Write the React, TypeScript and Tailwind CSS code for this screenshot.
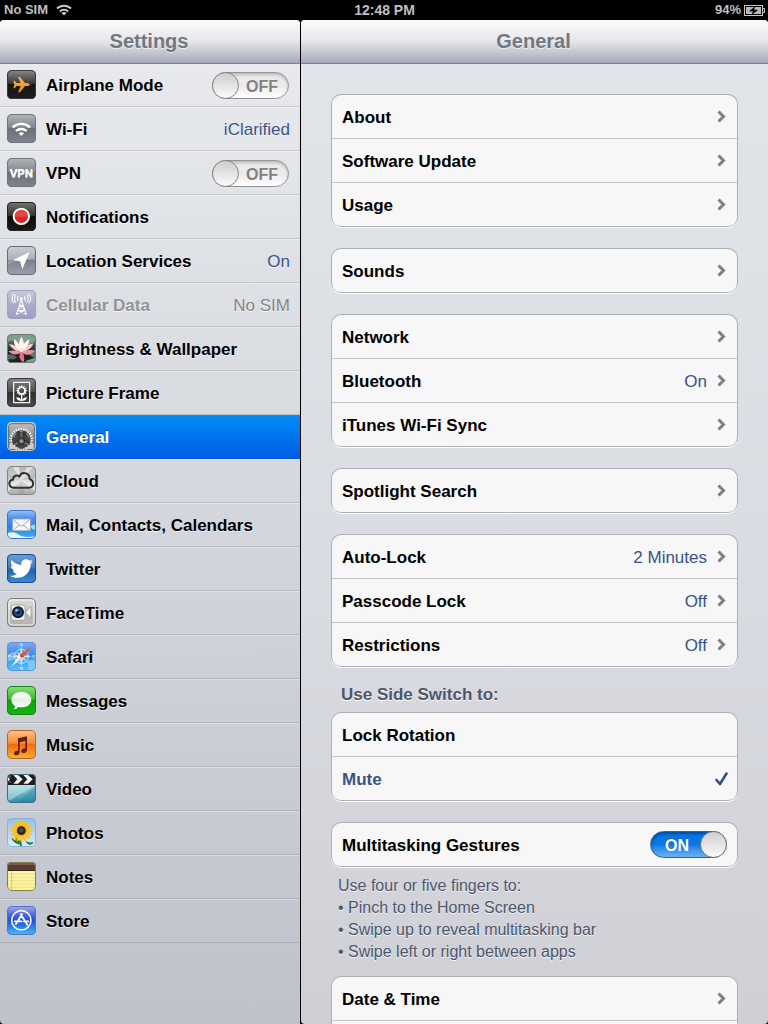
import { useState, type ReactNode } from 'react';
import { FaTwitter } from 'react-icons/fa';

type Stop = [string, string];

function Tile({ id, stops, edge, children }: { id: string; stops: Stop[]; edge: string; children?: ReactNode }) {
  return (
    <svg viewBox="0 0 87 87" className="size-[29px] shrink-0" aria-hidden="true">
      <defs>
        <linearGradient id={`${id}-fill`} x1="0" y1="0" x2="0" y2="1">
          {stops.map(([offset, color]) => (
            <stop key={offset} offset={offset} stopColor={color} />
          ))}
        </linearGradient>
        <clipPath id={`${id}-clip`}>
          <rect width="87" height="87" rx="14" />
        </clipPath>
      </defs>
      <g clipPath={`url(#${id}-clip)`}>
        <rect width="87" height="87" fill={`url(#${id}-fill)`} />
        {children}
      </g>
      <rect x="1.5" y="1.5" width="84" height="84" rx="13" fill="none" stroke={edge} strokeWidth="3" />
    </svg>
  );
}

const black: Stop[] = [['0', '#8a8a8a'], ['0.45', '#3c3c3c'], ['0.5', '#161616'], ['1', '#1c1c1c']];
const gray: Stop[] = [['0', '#b4b6ba'], ['0.48', '#81858c'], ['0.5', '#6a6f78'], ['1', '#7f848f']];

const angles = (n: number) => Array.from({ length: n }, (_, i) => (i * 360) / n);

const AirplaneIcon = () => (
  <Tile id="plane" stops={black} edge="#3a3a3a">
    <defs>
      <linearGradient id="plane-body" x1="0" y1="0" x2="0" y2="1">
        <stop offset="0" stopColor="#ffb84a" />
        <stop offset="1" stopColor="#f08412" />
      </linearGradient>
    </defs>
    <path
      d="M69 44c-2-4-8-5-15-5L39 21h-6l8 18H29l-6-7h-4l3 12-3 11h4l6-7h12l-8 19h6l15-19c7 0 13 0 15-4z"
      fill="url(#plane-body)"
    />
  </Tile>
);

const WifiIcon = () => (
  <Tile id="wifi" stops={gray} edge="#6f737b">
    <g fill="none" stroke="#fff" strokeWidth="7">
      <path d="M17 40a38 38 0 0 1 52 0" />
      <path d="M27 51a24 24 0 0 1 32 0" />
    </g>
    <path d="M43 66l-8-8q8-6 16 0z" fill="#fff" />
  </Tile>
);

const VpnIcon = () => (
  <Tile id="vpn" stops={gray} edge="#6f737b">
    <text x="43" y="57" textAnchor="middle" fontSize="35" fontWeight="700" fontFamily="Roboto, sans-serif" fill="#fff">
      VPN
    </text>
  </Tile>
);

const NotificationsIcon = () => (
  <Tile id="notif" stops={[['0', '#77756f'], ['0.47', '#34332f'], ['0.5', '#0c0c0a'], ['1', '#1a1a18']]} edge="#22221f">
    <circle cx="43" cy="43" r="23" fill="#d92626" stroke="#fff" strokeWidth="6" />
    <path d="M23 43a20 20 0 0 1 40 0q-20 5-40 0z" fill="#ff8d86" opacity=".3" />
  </Tile>
);

const LocationIcon = () => (
  <Tile id="loc" stops={[['0', '#c3c5cc'], ['0.46', '#9b9ea9'], ['0.5', '#7d818f'], ['1', '#9da1ae']]} edge="#676b7a">
    <path d="M0 0h87v36Q43 40 0 56z" fill="#fff" opacity=".18" />
    <path d="M68 18L18 42l21 4 7 23z" fill="#fff" />
  </Tile>
);

const CellularIcon = () => (
  <Tile id="cell" stops={[['0', '#c9cbdd'], ['0.5', '#a9acca'], ['1', '#9c9fc3']]} edge="#9fa2bd">
    <g fill="none" stroke="#f6f6fc" strokeWidth="3.5">
      <path d="M43 29L28 74M43 29l15 45M37 46l18 15M49 46L31 61M38 46h11M32 62h22M29 73l25-12M57 73L32 61" />
      <path d="M34 19q-5 7 0 14M52 19q5 7 0 14M27 14q-9 12 0 24M59 14q9 12 0 24M21 12q-12 14 0 28M65 12q12 14 0 28" />
    </g>
    <circle cx="43" cy="26" r="4.5" fill="#fff" />
  </Tile>
);

const LotusIcon = () => (
  <Tile id="lotus" stops={[['0', '#93a596'], ['0.3', '#4b6456'], ['0.6', '#1b2421'], ['1', '#1a231f']]} edge="#6e7a72">
    <path d="M0 24q22-12 36 4T87 20V10Q50 0 0 8z" fill="#7fa08c" />
    <path d="M60 52q16-8 27-4v22q-14 4-27-18z" fill="#5d7a68" />
    <path d="M0 62q18-4 30 8l-8 6H0z" fill="#4f6a62" />
    <path d="M58 80l29-10v17H54z" fill="#8a9c88" />
    <g fill="#f08da2">
      <path d="M43 56Q20 68 4 52q20-6 39 4z" />
      <path d="M43 56q24 14 40-5-21-8-40 5z" />
      <path d="M43 52Q27 72 50 86q6-20-7-34z" fill="#ea6c86" />
      <path d="M43 54Q18 52 6 30q26 2 37 24z" fill="#fac8cf" />
      <path d="M43 54q27-2 37-26-26 4-37 26z" fill="#fac8cf" />
    </g>
    <g fill="#fff3ee">
      <path d="M43 54Q18 38 21 15q20 12 22 39z" />
      <path d="M43 54q24-14 24-38-22 10-24 38z" />
      <path d="M43 54Q28 30 43 8q16 22 0 46z" />
    </g>
    <path d="M35 46q8-5 16 0l-4 9h-8z" fill="#f8dfae" />
  </Tile>
);

const PictureFrameIcon = () => (
  <Tile id="frame" stops={[['0', '#868686'], ['0.48', '#4b4b4b'], ['0.5', '#2e2e2e'], ['1', '#4a4a4a']]} edge="#3b3b3b">
    <rect x="20" y="13" width="48" height="61" fill="none" stroke="#fff" strokeWidth="3.5" />
    <g fill="#fff">
      {angles(12).map((a) => (
        <path key={a} d="M44 20l4 10h-8z" transform={`rotate(${a} 44 38)`} />
      ))}
      <path d="M42 48h4v22h-4zM43 68q-13 2-15-10 12 0 15 10zM45 68q13 2 15-10-12 0-15 10z" />
    </g>
    <circle cx="44" cy="38" r="10" fill="none" stroke="#fff" strokeWidth="5" />
    <circle cx="44" cy="38" r="7" fill="#555" />
  </Tile>
);

const GeneralIcon = () => (
  <Tile id="general" stops={[['0', '#c4c4c4'], ['0.5', '#8d8d8d'], ['1', '#5f5f5f']]} edge="#c9c9c9">
    <rect x="5" y="5" width="77" height="77" rx="9" fill="none" stroke="#6b6b6b" strokeWidth="3" />
    <path d="M7 54a37 37 0 0 1 73 0v14H7z" fill="#6f6f6f" />
    <g fill="#f0f0f0">
      {angles(26).map((a) => (
        <path key={a} d="M41 17h4l1 12h-6z" transform={`rotate(${a} 43 53)`} />
      ))}
    </g>
    <circle cx="43" cy="53" r="28" fill="#454545" />
    <path d="M20 46a24 24 0 0 1 46 0" fill="none" stroke="#8c8c8c" strokeWidth="4" />
    <path d="M36 52L27 30l10-4 6 16 6-16 10 4-9 22 20 9-3 9H19l-3-9z" fill="#383838" />
    <path d="M43 57V34M43 57L22 68M43 57l21 11" stroke="#787878" strokeWidth="5" />
    <circle cx="43" cy="57" r="10" fill="#5b5b5b" stroke="#262626" strokeWidth="3" />
    <circle cx="43" cy="58" r="4" fill="#a8a8a8" />
    <path d="M7 64l7-2 3 7 7-1 2 7 8 1v5H7zM80 64l-7-2-3 7-7-1-2 7-8 1v5h27z" fill="#cdcdcd" />
  </Tile>
);

const CloudIcon = () => (
  <Tile id="cloud" stops={[['0', '#b3b3b3'], ['0.5', '#d8d8d8'], ['1', '#aaaaaa']]} edge="#858585">
    <path d="M43 43L15 0h20zM43 43L60 0h22zM43 43L0 58v22zM43 43l44 12v24z" fill="#fff" opacity=".5" />
    <path d="M43 43L30 87h25zM43 43L0 20v20zM43 43l44-25v20z" fill="#888" opacity=".25" />
    <path
      d="M21 65c-17 0-19-22-3-24 0-13 15-15 19-9 6-17 31-13 31 7 14 5 14 26-3 26z"
      fill="#fff"
      fillOpacity=".15"
      stroke="#303335"
      strokeWidth="6"
      strokeLinejoin="round"
    />
  </Tile>
);

const MailIcon = () => (
  <Tile id="mail" stops={[['0', '#9dc3f5'], ['0.3', '#4b8eea'], ['0.6', '#2385ea'], ['1', '#43b4f7']]} edge="#3976c4">
    <path d="M0 70q16-6 28 0 12 10 26 10 12 2 33-2v9H0z" fill="#e4f6ff" />
    <path d="M70 50q6-8 17-6v12q-8 8-17-6z" fill="#a9d8fb" />
    <rect x="17" y="27" width="53" height="35" fill="#f4f4f4" stroke="#9fabb9" strokeWidth="2" />
    <path d="M18 28l20 18q5 4 10 0l21-18M18 61l19-16M69 61L49 45" fill="none" stroke="#8d949e" strokeWidth="2.2" />
  </Tile>
);

const TwitterIcon = () => (
  <Tile id="twitter" stops={[['0', '#6b9fd6'], ['0.48', '#3d7fc0'], ['0.52', '#1d64ad'], ['1', '#3b8bcf']]} edge="#174d8c">
    <FaTwitter x="9" y="9" size={69} color="#fff" />
  </Tile>
);

const FaceTimeIcon = () => (
  <Tile id="facetime" stops={[['0', '#dedddb'], ['0.5', '#c4c3bf'], ['1', '#b1b0ac']]} edge="#7e7c78">
    <rect x="6" y="6" width="75" height="75" rx="10" fill="none" stroke="#f4f4f2" strokeWidth="3" />
    <path d="M19 21h27q8 0 8 8v30q0 8-8 8H19q-6 0-6-6V27q0-6 6-6z" fill="#f7f7f6" stroke="#8e8d89" strokeWidth="2" />
    <path d="M56 43l16-18v37z" fill="#f7f7f6" stroke="#8e8d89" strokeWidth="2" />
    <circle cx="33" cy="43" r="18" fill="#151b25" />
    <circle cx="33" cy="43" r="12" fill="#1d4c8c" />
    <circle cx="33" cy="43" r="6" fill="#0b1930" />
    <circle cx="29" cy="37" r="4.5" fill="#89b8ea" />
  </Tile>
);

const SafariIcon = () => (
  <Tile id="safari" stops={[['0', '#81a9ef'], ['0.45', '#3f8be9'], ['1', '#52c6fb']]} edge="#5a92dc">
    <path d="M0 40q16-14 28-6 4 12-6 18T0 58zM58 58q16-8 29-2v31H62q6-16-4-29z" fill="#9fd9fa" opacity=".6" />
    <circle cx="43" cy="43" r="21" fill="none" stroke="#bfe3fd" strokeWidth="3" />
    <g fill="#d9effd">
      {angles(8).map((a, i) => (
        <path key={a} d={i % 2 ? 'M43 22l4 16h-8z' : 'M43 11l4 26h-8z'} transform={`rotate(${a} 43 43)`} />
      ))}
      <path d="M38 4h3l5 6V4h2v9h-3l-5-6v6h-2zM39 75h9v2h-6v2h6v7h-9v-2h6v-2h-6zM2 39l3 8 2-6 2 6 3-8M77 39h7v2h-5v2h4v2h-4v2h5v2h-7z" opacity=".8" />
    </g>
    <path d="M74 13L37 38l11 11z" fill="#e3582d" />
    <path d="M14 72l23-34 11 11z" fill="#fff" />
    <path d="M14 72l28.500-28.500L48 49z" fill="#c9cfd6" />
    <circle cx="43" cy="43" r="3" fill="#8a3b28" />
  </Tile>
);

const MessagesIcon = () => (
  <Tile id="messages" stops={[['0', '#8ce07c'], ['0.45', '#3bba2e'], ['0.5', '#12a00d'], ['1', '#15b510']]} edge="#128a12">
    <defs>
      <linearGradient id="bubble" x1="0" y1="0" x2="0" y2="1">
        <stop offset="0" stopColor="#fff" />
        <stop offset="0.5" stopColor="#e1f0e4" />
        <stop offset="1" stopColor="#fff" />
      </linearGradient>
    </defs>
    <path d="M43 18c18 0 30 10 30 23S61 64 43 64q-5 0-9-1-5 7-15 7 6-5 5-10-11-8-11-19c0-13 12-23 30-23z" fill="url(#bubble)" />
  </Tile>
);

const MusicIcon = () => (
  <Tile id="music" stops={[['0', '#fbc58f'], ['0.45', '#f58c32'], ['0.5', '#f06c10'], ['1', '#fbb22e']]} edge="#b4652a">
    <path d="M33 25l27-6v40q0 9-10 10-8 0-7-7 2-7 12-7V33l-17 4v29q0 9-10 10-8 0-7-7 2-8 12-7z" fill="#681d10" />
  </Tile>
);

const VideoIcon = () => (
  <Tile id="video" stops={[['0', '#d9eef2'], ['0.5', '#8cc6d4'], ['1', '#2a91a8']]} edge="#3a6f7d">
    <path d="M30 87l57-53v53z" fill="#147b97" opacity=".35" />
    <path d="M0 33h87L0 84z" fill="#e4f7fa" opacity=".4" />
    <rect width="87" height="33" fill="#1d1d1d" />
    <path d="M19 3h14l14 13-14 13H19l12-13zM49 3h14l14 13-14 13H49l12-13zM0 6l9 10-9 10z" fill="#f3f3f3" />
    <circle cx="9" cy="9" r="2" fill="#aaa" />
    <circle cx="9" cy="24" r="2" fill="#aaa" />
  </Tile>
);

const PhotosIcon = () => (
  <Tile id="photos" stops={[['0', '#8fbfee'], ['0.5', '#b2d6f5'], ['1', '#dcecf8']]} edge="#86b3df">
    <path d="M39 58h6q-3 12 0 29h-6zM40 80Q22 78 12 60q8 2 12 8 4-4 2-10 14 6 14 22zM56 68q6 8 24 4-4 10-14 8-8-2-10-12z" fill="#2c7a25" />
    <g fill="#f9c32b">
      {angles(16).map((a) => (
        <path key={a} d="M43 2q9 13 2 31h-4q-7-18 2-31z" transform={`rotate(${a} 43 38)`} />
      ))}
    </g>
    <g fill="#f6a41c">
      {angles(12).map((a) => (
        <path key={a} d="M43 15l4 15h-8z" transform={`rotate(${a + 10} 43 38)`} />
      ))}
    </g>
    <circle cx="43" cy="38" r="13" fill="#2c2018" />
    <circle cx="43" cy="37" r="7" fill="#4d4b50" />
  </Tile>
);

const NotesIcon = () => (
  <Tile id="notes" stops={[['0', '#fdf8ad'], ['1', '#fbf493']]} edge="#8e7b52">
    <path d="M3 36h81M3 46h81M3 56h81M3 66h81M3 76h81" stroke="#dfd98c" strokeWidth="2" />
    <path d="M14 28v59" stroke="#d8a878" strokeWidth="2" />
    <rect width="87" height="25" fill="#5b3b31" />
    <rect width="87" height="9" fill="#785a4e" />
    <rect y="24" width="87" height="3" fill="#3c241c" />
  </Tile>
);

const StoreIcon = () => (
  <Tile id="store" stops={[['0', '#a4afe9'], ['0.3', '#5166dc'], ['0.5', '#204fd2'], ['1', '#3fc1f2']]} edge="#5272c9">
    <circle cx="43" cy="43" r="29" fill="none" stroke="#eef4ff" strokeWidth="5" />
    <path d="M45 25L27 54M41 25l20 31M23 46h21M51 46h13" fill="none" stroke="#fff" strokeWidth="5.5" strokeLinecap="round" />
  </Tile>
);

function Switch({ label, initial = false }: { label: string; initial?: boolean }) {
  const [on, setOn] = useState(initial);
  return (
    <label className="relative flex h-[27px] w-[77px] shrink-0 cursor-pointer items-center rounded-full">
      <input
        type="checkbox"
        role="switch"
        aria-label={label}
        checked={on}
        onChange={() => setOn(!on)}
        className={
          on
            ? 'absolute inset-0 cursor-pointer appearance-none rounded-full border border-[#2465a8] bg-linear-to-b from-[#0877e6] from-50% to-[#68b3f3] shadow-[inset_0_2px_3px_rgba(0,30,90,0.5)]'
            : 'absolute inset-0 cursor-pointer appearance-none rounded-full border border-[#939393] bg-linear-to-b from-[#eaeaea] from-50% to-white shadow-[inset_0_2px_3px_rgba(0,0,0,0.2)]'
        }
      />
      {on ? (
        <>
          <span className="pointer-events-none relative grow pt-0.5 pl-[15px] text-base leading-5 font-bold text-white [text-shadow:0_-1px_0_#2060a8]">ON</span>
          <span className="pointer-events-none relative size-[27px] rounded-full border border-[#777] bg-linear-to-b from-[#cecece] to-[#fbfbfb]" />
        </>
      ) : (
        <>
          <span className="pointer-events-none relative size-[27px] rounded-full border border-[#878787] bg-linear-to-b from-[#cecece] to-[#fbfbfb]" />
          <span className="pointer-events-none relative pt-0.5 pl-[7px] text-base leading-5 font-bold text-[#808080]">OFF</span>
        </>
      )}
    </label>
  );
}

type NavItem = { label: string; icon: () => ReactNode; value?: string; toggle?: boolean; disabled?: boolean };

const navItems: NavItem[] = [
  { label: 'Airplane Mode', icon: AirplaneIcon, toggle: true },
  { label: 'Wi-Fi', icon: WifiIcon, value: 'iClarified' },
  { label: 'VPN', icon: VpnIcon, toggle: true },
  { label: 'Notifications', icon: NotificationsIcon },
  { label: 'Location Services', icon: LocationIcon, value: 'On' },
  { label: 'Cellular Data', icon: CellularIcon, value: 'No SIM', disabled: true },
  { label: 'Brightness & Wallpaper', icon: LotusIcon },
  { label: 'Picture Frame', icon: PictureFrameIcon },
  { label: 'General', icon: GeneralIcon },
  { label: 'iCloud', icon: CloudIcon },
  { label: 'Mail, Contacts, Calendars', icon: MailIcon },
  { label: 'Twitter', icon: TwitterIcon },
  { label: 'FaceTime', icon: FaceTimeIcon },
  { label: 'Safari', icon: SafariIcon },
  { label: 'Messages', icon: MessagesIcon },
  { label: 'Music', icon: MusicIcon },
  { label: 'Video', icon: VideoIcon },
  { label: 'Photos', icon: PhotosIcon },
  { label: 'Notes', icon: NotesIcon },
  { label: 'Store', icon: StoreIcon },
];

function NavRow({ item, selected, onSelect }: { item: NavItem; selected: boolean; onSelect: () => void }) {
  const Icon = item.icon;
  const row = 'flex h-11 w-full items-center gap-2.5 border-b pr-2.5 pl-[7px] text-left';
  const plain = `${row} border-black/12 shadow-[inset_0_1px_0_rgba(255,255,255,0.35)] [text-shadow:0_1px_0_rgba(255,255,255,0.7)]`;
  if (item.toggle) {
    return (
      <div className={plain}>
        <Icon />
        <span className="grow pt-0.5 font-bold">{item.label}</span>
        <div className="pt-0.5 pr-px">
          <Switch label={item.label} />
        </div>
      </div>
    );
  }
  return (
    <button
      type="button"
      disabled={item.disabled}
      onClick={onSelect}
      aria-current={selected ? 'page' : undefined}
      className={
        selected
          ? `${row} border-[#0159de] bg-linear-to-b from-[#058cf5] to-[#015de6] text-white [text-shadow:0_-1px_0_rgba(0,0,0,0.35)]`
          : plain
      }
    >
      <Icon />
      <span className={item.disabled ? 'grow pt-0.5 font-bold text-[#929396]' : 'grow pt-0.5 font-bold'}>{item.label}</span>
      {item.value && <span className={item.disabled ? 'pt-0.5 text-[#85868a]' : 'pt-0.5 text-[#385487]'}>{item.value}</span>}
    </button>
  );
}

function Header({ children }: { children: string }) {
  return (
    <header className="relative z-10 -mb-px flex h-11 shrink-0 items-center justify-center border-b border-[#7b7f93] bg-linear-to-b from-[#fbfbfc] via-[#e6e6ea] via-50% to-[#a5a8b8] pr-0.5 pb-0.5">
      <h1 className="text-xl leading-6 font-bold text-[#717880] [text-shadow:0_1px_0_rgba(255,255,255,0.6)]">{children}</h1>
    </header>
  );
}

function Group({ children }: { children: ReactNode }) {
  return (
    <div className="overflow-hidden rounded-[10px] border border-b-0 border-[#adafb5] bg-[#f7f7f7] shadow-[0_1px_0_#fff] [&>*]:border-b [&>*]:border-[#c4c5c8] [&>*:last-child]:rounded-b-[9px] [&>*:last-child]:border-[#adafb5]">
      {children}
    </div>
  );
}

function LinkRow({ label, value }: { label: string; value?: string }) {
  return (
    <button type="button" className="flex h-11 w-full items-center pr-[11px] pl-2.5 text-left">
      <span className="grow pt-0.5 font-bold">{label}</span>
      {value && <span className="pt-0.5 pr-2.5 text-[#385487]">{value}</span>}
      <svg viewBox="0 0 9 13" className="h-[13px] w-[9px]" aria-hidden="true">
        <path d="M1.500 1.500l5 5-5 5" fill="none" stroke="#7f7f7f" strokeWidth="3" />
      </svg>
    </button>
  );
}

function ChoiceRow({ label, checked, onChange }: { label: string; checked: boolean; onChange: () => void }) {
  return (
    <label className="flex h-11 cursor-pointer items-center pr-[9px] pl-2.5">
      <input type="radio" name="side-switch" checked={checked} onChange={onChange} className="sr-only" />
      <span className={checked ? 'grow pt-0.5 font-bold text-[#385487]' : 'grow pt-0.5 font-bold'}>{label}</span>
      {checked && (
        <svg viewBox="0 0 13 14" className="h-3.5 w-[13px]" aria-hidden="true">
          <path d="M1.500 8l3.500 4L11.500 1.500" fill="none" stroke="#324f87" strokeWidth="2.6" strokeLinecap="round" strokeLinejoin="round" />
        </svg>
      )}
    </label>
  );
}

function StatusBar() {
  return (
    <div className="grid h-5 shrink-0 grid-cols-3 items-center pr-[3px] pl-1 text-[13px] leading-5 font-bold text-[#bfbfbf]">
      <div className="flex items-center gap-2">
        <span>No SIM</span>
        <svg viewBox="0 0 16 12" className="h-3 w-4" aria-label="Wi-Fi signal" role="img">
          <g fill="none" stroke="#c8c8c8" strokeWidth="2">
            <path d="M1 4.500a10 10 0 0 1 14 0" />
            <path d="M3.800 7.500a6 6 0 0 1 8.400 0" />
          </g>
          <path d="M8 11.500L5.500 9q2.500-1.800 5 0z" fill="#c8c8c8" />
        </svg>
      </div>
      <span className="text-center text-sm leading-5">12:48 PM</span>
      <div className="flex items-center justify-end gap-[3px]">
        <span>94%</span>
        <svg viewBox="0 0 21 11" className="h-[11px] w-[21px]" aria-label="Charging" role="img">
          <rect x="0.500" y="0.500" width="18" height="10" fill="none" stroke="#c8c8c8" />
          <rect x="2" y="2" width="15" height="7" fill="#b9b9b9" />
          <path d="M19 3.500h1.500v4H19" fill="none" stroke="#c8c8c8" />
          <path d="M11.500 1L5 6.200l4 .4L7.500 10 14 5l-4-.5z" fill="#000" />
        </svg>
      </div>
    </div>
  );
}

export default function App() {
  const [selected, setSelected] = useState('General');
  const [sideSwitch, setSideSwitch] = useState('Mute');
  return (
    <div className="flex h-screen flex-col overflow-hidden bg-black font-['Liberation_Sans',Arial,sans-serif] text-[17px] leading-[22px] text-black">
      <StatusBar />
      <div className="flex min-h-0 grow gap-px">
        <nav className="flex w-[300px] shrink-0 flex-col overflow-hidden rounded-t-[4px] rounded-bl-[4px] bg-linear-to-b from-[#e9ebee] to-[#bec2cb]">
          <Header>Settings</Header>
          <div className="min-h-0 grow overflow-y-auto [scrollbar-width:none]">
            {navItems.map((item) => (
              <NavRow key={item.label} item={item} selected={item.label === selected} onSelect={() => setSelected(item.label)} />
            ))}
          </div>
        </nav>
        <main className="flex min-w-0 grow flex-col overflow-hidden rounded-[4px] bg-linear-to-b from-[#e2e6ea] via-[#d9dce2] via-55% to-[#cfd0d6]">
          <Header>General</Header>
          <div className="flex min-h-0 grow flex-col gap-[21px] overflow-y-auto px-[30px] pt-[31px] [scrollbar-width:none] [&>*]:shrink-0">
            <Group>
              <LinkRow label="About" />
              <LinkRow label="Software Update" />
              <LinkRow label="Usage" />
            </Group>
            <Group>
              <LinkRow label="Sounds" />
            </Group>
            <Group>
              <LinkRow label="Network" />
              <LinkRow label="Bluetooth" value="On" />
              <LinkRow label="iTunes Wi-Fi Sync" />
            </Group>
            <Group>
              <LinkRow label="Spotlight Search" />
            </Group>
            <Group>
              <LinkRow label="Auto-Lock" value="2 Minutes" />
              <LinkRow label="Passcode Lock" value="Off" />
              <LinkRow label="Restrictions" value="Off" />
            </Group>
            <section className="-mt-1" aria-labelledby="side-switch-title">
              <h2 id="side-switch-title" className="pb-1.5 pl-2.5 font-bold text-[#4c566c] [text-shadow:0_1px_0_#fff]">
                Use Side Switch to:
              </h2>
              <Group>
                <ChoiceRow label="Lock Rotation" checked={sideSwitch === 'Lock'} onChange={() => setSideSwitch('Lock')} />
                <ChoiceRow label="Mute" checked={sideSwitch === 'Mute'} onChange={() => setSideSwitch('Mute')} />
              </Group>
            </section>
            <section>
              <Group>
                <div className="flex h-11 items-center px-2.5">
                  <span className="grow pt-0.5 font-bold">Multitasking Gestures</span>
                  <Switch label="Multitasking Gestures" initial />
                </div>
              </Group>
              <div className="pt-2 pl-[7px] text-base leading-[22px] text-[#4c566c] [text-shadow:0_1px_0_rgba(255,255,255,0.8)]">
                <p>Use four or five fingers to:</p>
                <ul>
                  <li>• Pinch to the Home Screen</li>
                  <li>• Swipe up to reveal multitasking bar</li>
                  <li>• Swipe left or right between apps</li>
                </ul>
              </div>
            </section>
            <div className="-mt-2">
              <Group>
                <LinkRow label="Date & Time" />
                <div className="h-11" />
              </Group>
            </div>
          </div>
        </main>
      </div>
    </div>
  );
}
